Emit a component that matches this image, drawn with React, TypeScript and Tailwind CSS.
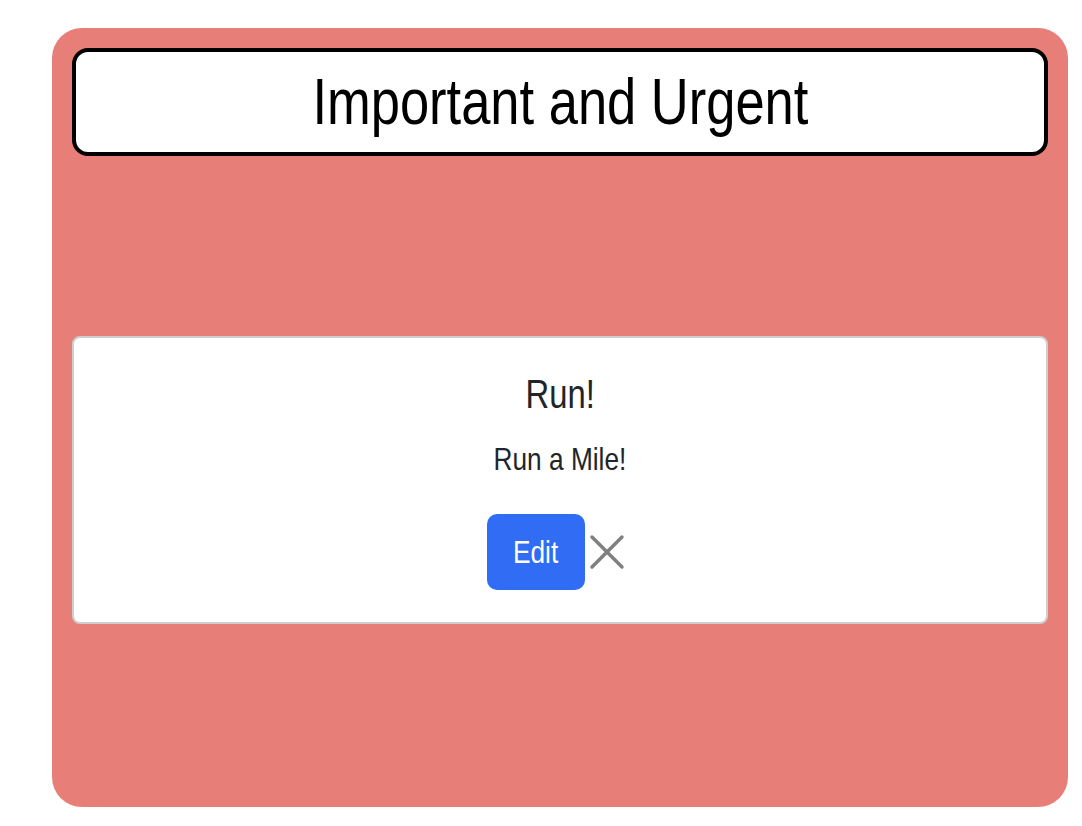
export default function App() {
  return (
    <div
      className="min-h-[826px] bg-white pl-[52px] pt-[28px]"
      style={{ fontFamily: '"Liberation Sans", Arial, sans-serif' }}
    >
      <div className="flex h-[779px] w-[1016px] flex-col rounded-[30px] bg-[#e77f78] px-[20px] pb-[4px] pt-[20px]">
        <div className="flex h-[108px] items-center justify-center rounded-[16px] border-4 border-black bg-white">
          <h1 className="inline-block scale-x-[0.82] text-[64px] leading-none text-black">Important and Urgent</h1>
        </div>

        <div className="flex flex-1 items-center">
          <div className="w-full rounded-[8px] border-2 border-[#cfcfcf] bg-white pb-[32px] pt-[32px] text-center text-[#212529]">
            <h2 className="inline-block scale-x-[0.82] text-[40px] leading-[48px]">Run!</h2>
            <div>
              <p className="mt-[23px] inline-block scale-x-[0.82] text-[32px] leading-[36px]">Run a Mile!</p>
            </div>
            <div className="mt-[37px] flex items-center justify-center gap-[4px] pr-[8px]">
              <button className="h-[76px] w-[98px] rounded-[10px] bg-[#316cf4] text-white">
                <span className="inline-block scale-x-[0.82] text-[32px]">Edit</span>
              </button>
              <svg width="36" height="36" viewBox="0 0 36 36" className="text-[#808080]">
                <path d="M3 3 L33 33 M33 3 L3 33" stroke="currentColor" strokeWidth="3.5" strokeLinecap="round" />
              </svg>
            </div>
          </div>
        </div>
      </div>
    </div>
  );
}
